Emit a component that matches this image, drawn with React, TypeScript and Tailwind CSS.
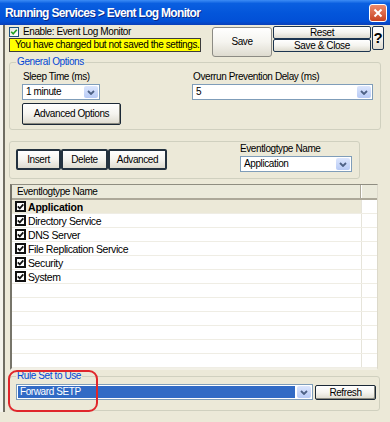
import type { ReactNode } from "react";

const LOG_TYPES = [
  "Application",
  "Directory Service",
  "DNS Server",
  "File Replication Service",
  "Security",
  "System",
];

function Chevron() {
  return (
    <svg width="8" height="5" viewBox="0 0 8 5" aria-hidden="true">
      <path d="M1 1 L4 4 L7 1" fill="none" stroke="#4D6185" strokeWidth="1.8" />
    </svg>
  );
}

function Combo({
  value,
  className,
  selected = false,
}: {
  value: string;
  className: string;
  selected?: boolean;
}) {
  return (
    <div className={`flex h-[16px] border border-[#7F9DB9] bg-white ${className}`}>
      <div className="flex min-w-0 flex-1 p-[1px]">
        <span
          className={
            selected
              ? "flex flex-1 items-center bg-[#316AC5] px-[2px] text-white"
              : "flex flex-1 items-center px-[2px]"
          }
        >
          {value}
        </span>
      </div>
      <div className="m-[1px] flex w-[14px] items-center justify-center rounded-[2px] bg-gradient-to-b from-[#DCE6FD] to-[#B7CAF5]">
        <Chevron />
      </div>
    </div>
  );
}

function Button({ children, className }: { children: ReactNode; className: string }) {
  return (
    <button
      type="button"
      className={`flex items-center justify-center bg-gradient-to-b from-white via-[#F5F4EF] to-[#DEDBCF] ${className}`}
    >
      {children}
    </button>
  );
}

function Group({
  label,
  className,
  children,
}: {
  label?: string;
  className: string;
  children: ReactNode;
}) {
  return (
    <div className={`relative ml-[4px] rounded-[3px] border border-[#D0D0BF] ${className}`}>
      {label && (
        <span className="absolute -top-[7px] left-[6px] bg-[#ECE9D8] px-[1px] text-[#0046D5]">
          {label}
        </span>
      )}
      {children}
    </div>
  );
}

function XpCheck() {
  return (
    <span className="flex h-[10px] w-[10px] items-center justify-center border border-[#1C5180] bg-gradient-to-br from-[#E6E6E0] to-white">
      <svg width="8" height="8" viewBox="0 0 8 8" aria-hidden="true">
        <path d="M1.2 3.8 L3.2 5.8 L6.8 1.8" fill="none" stroke="#21A121" strokeWidth="1.6" />
      </svg>
    </span>
  );
}

function ListCheck() {
  return (
    <span className="flex h-[11px] w-[11px] items-center justify-center border-2 border-[#111] bg-white">
      <svg width="7" height="7" viewBox="0 0 7 7" aria-hidden="true">
        <path d="M0.8 3.4 L2.8 5.4 L6.3 1.4" fill="none" stroke="#111" strokeWidth="1.7" />
      </svg>
    </span>
  );
}

function TitleBar() {
  return (
    <div className="flex h-[25px] items-center bg-[linear-gradient(180deg,#3D8CF5_0%,#0A5FE0_14%,#0355DA_55%,#0250D6_85%,#0B3FB8_100%)] pl-[5px] pr-[3px]">
      <span className="flex-1 text-[12px] font-bold tracking-[-0.7px] text-white [text-shadow:1px_1px_0_#0A2A8A]">
        Running Services &gt; Event Log Monitor
      </span>
      <div className="flex h-[18px] w-[18px] items-center justify-center rounded-[3px] border border-white bg-gradient-to-b from-[#EC8A6C] to-[#C7421F]">
        <svg width="10" height="10" viewBox="0 0 10 10" aria-hidden="true">
          <path d="M1.5 1.5 L8.5 8.5 M8.5 1.5 L1.5 8.5" stroke="white" strokeWidth="2" />
        </svg>
      </div>
    </div>
  );
}

export default function App() {
  const rows = Array.from({ length: 12 }, (_, i) => LOG_TYPES[i]);

  return (
    <div className="relative h-[422px] w-[390px] overflow-hidden bg-[#ECE9D8] font-['Liberation_Sans',Arial,sans-serif] text-[10px] leading-[12px] tracking-[-0.4px] text-black">
      <TitleBar />
      <div className="flex">
        <div className="h-[387px] w-[3px] bg-[#F4F3EC]" />
        <div className="h-[387px] w-[2px] bg-[#6F6D62]" />
        <div className="flex flex-1 flex-col">
          {/* top row: enable + save buttons */}
          <div className="mt-[1px] flex h-[31px]">
            <div className="ml-[4px] w-[192px]">
              <div className="flex h-[12px] items-center">
                <XpCheck />
                <span className="ml-[4px]">Enable: Event Log Monitor</span>
              </div>
              <div className="flex h-[14px] items-center border border-[#3C3C3C] bg-[#FFFF00] pl-[5px]">
                You have changed but not saved the settings.
              </div>
            </div>
            <Button className="ml-[11px] mt-[1px] h-[30px] w-[60px] rounded-[3px] border border-[#8C8B84]">
              Save
            </Button>
            <div className="ml-[1px] flex w-[98px] flex-col">
              <Button className="h-[13px] rounded-[2px] border border-[#1D3550]">Reset</Button>
              <Button className="h-[13px] rounded-[2px] border border-[#1D3550]">Save &amp; Close</Button>
            </div>
            <Button className="ml-[1px] h-[24px] w-[12px] rounded-[2px] border border-[#1D3550] text-[15px] font-bold">
              ?
            </Button>
          </div>

          {/* general options */}
          <Group label="General Options" className="mt-[5px] flex h-[68px] w-[372px]">
            <div className="ml-[12px] mt-[8px] flex flex-col">
              <span className="pl-[1px]">Sleep Time (ms)</span>
              <Combo value="1 minute" className="mt-[1px] w-[78px]" />
              <Button className="mt-[3px] h-[22px] w-[99px] rounded-[2px] border border-[#1B2836] shadow-[inset_-1px_-1px_0_#8A8A80]">
                Advanced Options
              </Button>
            </div>
            <div className="ml-[71px] mt-[8px] flex flex-col">
              <span className="pl-[1px]">Overrun Prevention Delay (ms)</span>
              <Combo value="5" className="mt-[1px] w-[181px]" />
            </div>
          </Group>

          {/* insert / delete / type picker */}
          <Group className="mt-[11px] flex h-[38px] w-[351px]">
            <div className="ml-[6px] mt-[7px] flex">
              <Button className="h-[21px] w-[45px] rounded-[2px] border-2 border-[#24323F]">Insert</Button>
              <Button className="h-[21px] w-[47px] rounded-[2px] border-2 border-[#24323F]">Delete</Button>
              <Button className="h-[21px] w-[59px] rounded-[2px] border-2 border-[#24323F]">Advanced</Button>
            </div>
            <div className="ml-[73px] mt-[1px] flex flex-col">
              <span>Eventlogtype Name</span>
              <Combo value="Application" className="mt-[1px] w-[112px]" />
            </div>
          </Group>

          {/* list */}
          <div className="ml-[5px] mt-[5px] h-[186px] w-[368px] border-b-2 border-l-2 border-r border-t border-b-[#F2F0E6] border-l-[#77756A] border-r-[#DCD9CB] border-t-[#8F8D81] bg-white">
            <div className="flex h-[15px] border-b-2 border-[#ACA899] bg-[#EBEADB]">
              <div className="flex w-[349px] items-center border-r border-[#ACA899] pl-[5px]">
                Eventlogtype Name
              </div>
              <div className="flex-1 border-l border-white" />
            </div>
            {rows.map((name, i) => (
              <div key={i} className="flex h-[14px] border-b border-[#EFEDE4]">
                <div
                  className={`flex w-[349px] items-center gap-[2px] pl-[3px] ${
                    i === 0 ? "bg-[#ECE9D8] font-bold tracking-[-0.2px]" : ""
                  }`}
                >
                  {name && (
                    <>
                      <ListCheck />
                      <span className="text-[10.5px]">{name}</span>
                    </>
                  )}
                </div>
                <div className="flex-1 border-l border-[#E6E4DA]" />
              </div>
            ))}
          </div>

          {/* rule set */}
          <Group label="Rule Set to Use" className="mt-[6px] flex h-[35px] w-[371px] items-start">
            <Combo value="Forward SETP" selected className="ml-[6px] mt-[7px] w-[297px]" />
            <Button className="ml-[2px] mt-[8px] h-[15px] w-[61px] rounded-[2px] border border-[#1B2836] shadow-[inset_-1px_-1px_0_#8A8A80]">
              Refresh
            </Button>
          </Group>
        </div>
      </div>
      <div className="absolute left-[8px] top-[370px] h-[42px] w-[90px] rounded-[9px] border-2 border-[#E0262B]" />
    </div>
  );
}
